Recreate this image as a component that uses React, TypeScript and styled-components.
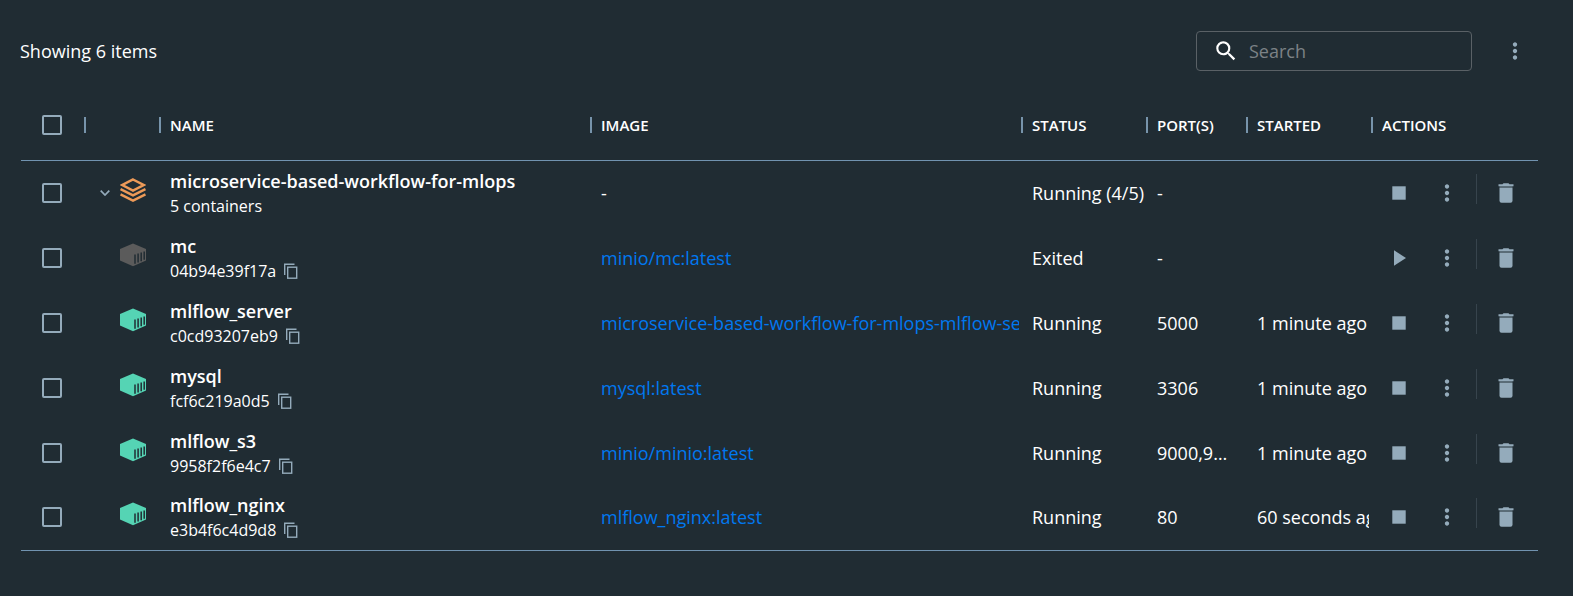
import React from "react";
import styled, { createGlobalStyle } from "styled-components";
import { MdMoreVert, MdSearch } from "react-icons/md";

const GlobalStyle = createGlobalStyle`
  * { box-sizing: border-box; }
  body {
    margin: 0;
    background: #202c33;
    color: #ffffff;
    font-family: "Open Sans", sans-serif;
    font-size: 18px;
    line-height: 24px;
  }
`;

const Page = styled.main`
  padding: 31px 35px 40px 20px;
`;

const Toolbar = styled.header`
  display: flex;
  align-items: center;
  height: 40px;
`;

const Count = styled.p`
  margin: 0 auto 0 0;
`;

const SearchBox = styled.label`
  display: flex;
  align-items: center;
  gap: 10px;
  width: 276px;
  height: 40px;
  padding: 0 16px;
  border: 1px solid #5a6166;
  border-radius: 4px;
`;

const SearchInput = styled.input`
  flex: 1;
  min-width: 0;
  padding: 0;
  border: 0;
  outline: 0;
  background: none;
  color: inherit;
  font: inherit;
  &::placeholder {
    color: #7c8286;
    opacity: 1;
  }
`;

const IconButton = styled.button`
  display: flex;
  align-items: center;
  justify-content: center;
  width: 30px;
  height: 30px;
  padding: 0;
  border: 0;
  background: none;
  color: #94abbb;
  cursor: pointer;
`;

const MenuSlot = styled.div`
  margin: 0 8px 0 28px;
`;

const TableFrame = styled.section`
  margin: 19px 0 0 1px;
`;

const Table = styled.table`
  width: 100%;
  table-layout: fixed;
  border-collapse: separate;
  border-spacing: 0;
`;

const Col = styled.col<{ $width?: number }>`
  width: ${(p) => (p.$width ? `${p.$width}px` : "auto")};
`;

const Th = styled.th<{ $check?: boolean }>`
  position: relative;
  height: 71px;
  padding: 0 4px 0 ${(p) => (p.$check ? 21 : 9)}px;
  border-bottom: 1px solid #7193b0;
  text-align: left;
  font-size: 15px;
  font-weight: 600;
  line-height: 20px;
  text-transform: uppercase;
  &:not(:last-child)::after {
    content: "";
    position: absolute;
    right: 0;
    top: 27px;
    width: 2px;
    height: 16px;
    background: #7794ab;
  }
`;

const Row = styled.tr`
  &:last-child > td {
    border-bottom: 1px solid #7193b0;
  }
`;

const Td = styled.td<{ $check?: boolean }>`
  height: 65px;
  padding: 0 4px 2px ${(p) => (p.$check ? 21 : 9)}px;
  white-space: nowrap;
`;

const Clip = styled.div`
  overflow: hidden;
`;

const Checkbox = styled.input`
  display: block;
  appearance: none;
  width: 20px;
  height: 20px;
  margin: 0;
  border: 2px solid #94abbb;
  border-radius: 2px;
  &:checked {
    background: #94abbb;
  }
`;

const KindCell = styled.div`
  display: flex;
  align-items: center;
  justify-content: flex-end;
  gap: 10px;
  padding-right: 11px;
`;

const Chevron = styled(IconButton)`
  width: 10px;
  height: 20px;
`;

const KindIcon = styled.svg`
  width: 26px;
  height: 30px;
  padding-bottom: 6px;
`;

const Name = styled.div`
  font-weight: 600;
  line-height: 26px;
`;

const Detail = styled.div`
  display: flex;
  align-items: center;
  gap: 7px;
  font-size: 16px;
  line-height: 24px;
`;

const CopyButton = styled(IconButton)`
  width: 16px;
  height: 16px;
`;

const ImageLink = styled.a`
  color: #0078f0;
  text-decoration: none;
`;

const Ports = styled.div`
  width: 76px;
  overflow: hidden;
  text-overflow: ellipsis;
`;

const Actions = styled.div`
  display: flex;
  align-items: center;
  height: 38px;
  padding-left: 2px;
`;

const MoreButton = styled(IconButton)`
  margin-left: 18px;
`;

const Divider = styled.span`
  align-self: flex-start;
  width: 1px;
  height: 30px;
  margin: 0 14px;
  background: #37444d;
`;

const StackIcon = () => (
  <KindIcon viewBox="0 0 26 24" fill="none" stroke="#ed9a58" strokeWidth="2.5" aria-hidden="true">
    <path d="M13 1.5 23.6 7 13 12.5 2.4 7Z" />
    <path d="M0.5 11.2 13 17.4 25.5 11.2" />
    <path d="M0.5 16.4 13 22.6 25.5 16.4" />
  </KindIcon>
);

const ContainerIcon = ({ color }: { color: string }) => (
  <KindIcon viewBox="0 0 26 24" aria-hidden="true">
    <path d="M13 0.6 26 6V17.6L13 23.2 0 17.6V6Z" fill={color} />
    <path d="M15 11.4v9.4M18.1 10.4v9.2M21.2 9.4v8.8M24.2 8.6v8.2" stroke="#202c33" strokeWidth="1.5" />
  </KindIcon>
);

const CopyIcon = () => (
  <svg width="16" height="16" viewBox="0 0 16 16" fill="none" stroke="currentColor" strokeWidth="1.4">
    <rect x="4.7" y="4.2" width="9" height="11" />
    <path d="M1.7 12V1.2H11.5" />
  </svg>
);

const StopIcon = () => (
  <svg width="14" height="14" viewBox="0 0 14 14">
    <rect x="0.3" y="0.3" width="13.4" height="13.4" fill="currentColor" />
  </svg>
);

const PlayIcon = () => (
  <svg width="14" height="16" viewBox="0 0 14 16">
    <path d="M2 0.3 14 8 2 15.7Z" fill="currentColor" />
  </svg>
);

const TrashIcon = () => (
  <svg width="16" height="20" viewBox="0 0 16 20" fill="currentColor">
    <path d="M0.5 1.2H4.5L5.5 0.2H10.5L11.5 1.2H15.5V3.3H0.5Z" />
    <path d="M1.5 3.3H14.5V5H1.5Z" opacity="0.5" />
    <path d="M1.5 5H14.5V17.8A2 2 0 0 1 12.5 19.8H3.5A2 2 0 0 1 1.5 17.8Z" />
  </svg>
);

type Container = {
  name: string;
  id: string;
  image: string;
  status: string;
  ports: string;
  started: string;
};

const containers: Container[] = [
  { name: "mc", id: "04b94e39f17a", image: "minio/mc:latest", status: "Exited", ports: "-", started: "" },
  { name: "mlflow_server", id: "c0cd93207eb9", image: "microservice-based-workflow-for-mlops-mlflow-server:latest", status: "Running", ports: "5000", started: "1 minute ago" },
  { name: "mysql", id: "fcf6c219a0d5", image: "mysql:latest", status: "Running", ports: "3306", started: "1 minute ago" },
  { name: "mlflow_s3", id: "9958f2f6e4c7", image: "minio/minio:latest", status: "Running", ports: "9000,9001", started: "1 minute ago" },
  { name: "mlflow_nginx", id: "e3b4f6c4d9d8", image: "mlflow_nginx:latest", status: "Running", ports: "80", started: "60 seconds ago" },
];

const RowActions = ({ name, running }: { name: string; running: boolean }) => (
  <Actions>
    <IconButton aria-label={`${running ? "Stop" : "Start"} ${name}`}>
      {running ? <StopIcon /> : <PlayIcon />}
    </IconButton>
    <MoreButton aria-label={`More actions for ${name}`}>
      <MdMoreVert size={26} />
    </MoreButton>
    <Divider />
    <IconButton aria-label={`Delete ${name}`}>
      <TrashIcon />
    </IconButton>
  </Actions>
);

export default function App() {
  return (
    <Page>
      <GlobalStyle />
      <Toolbar>
        <Count>Showing 6 items</Count>
        <SearchBox>
          <MdSearch size={26} />
          <SearchInput type="text" placeholder="Search" aria-label="Search" />
        </SearchBox>
        <MenuSlot>
          <IconButton aria-label="Table options">
            <MdMoreVert size={26} />
          </IconButton>
        </MenuSlot>
      </Toolbar>
      <TableFrame>
        <Table>
          <colgroup>
            <Col $width={65} />
            <Col $width={75} />
            <Col />
            <Col />
            <Col $width={125} />
            <Col $width={100} />
            <Col $width={125} />
            <Col $width={165} />
          </colgroup>
          <thead>
            <tr>
              <Th $check>
                <Checkbox type="checkbox" aria-label="Select all" />
              </Th>
              <Th aria-label="Kind" />
              <Th>Name</Th>
              <Th>Image</Th>
              <Th>Status</Th>
              <Th>Port(s)</Th>
              <Th>Started</Th>
              <Th>Actions</Th>
            </tr>
          </thead>
          <tbody>
            <Row>
              <Td $check>
                <Checkbox type="checkbox" aria-label="Select microservice-based-workflow-for-mlops" />
              </Td>
              <Td>
                <KindCell>
                  <Chevron aria-label="Collapse group">
                    <svg width="10" height="6" viewBox="0 0 10 6" fill="none" stroke="currentColor" strokeWidth="1.7">
                      <path d="M0.7 0.7 5 5 9.3 0.7" />
                    </svg>
                  </Chevron>
                  <StackIcon />
                </KindCell>
              </Td>
              <Td>
                <Name>microservice-based-workflow-for-mlops</Name>
                <Detail>5 containers</Detail>
              </Td>
              <Td>-</Td>
              <Td>Running (4/5)</Td>
              <Td>-</Td>
              <Td />
              <Td>
                <RowActions name="microservice-based-workflow-for-mlops" running />
              </Td>
            </Row>
            {containers.map((c) => {
              const running = c.status === "Running";
              return (
                <Row key={c.id}>
                  <Td $check>
                    <Checkbox type="checkbox" aria-label={`Select ${c.name}`} />
                  </Td>
                  <Td>
                    <KindCell>
                      <ContainerIcon color={running ? "#55d4b4" : "#5b5b5b"} />
                    </KindCell>
                  </Td>
                  <Td>
                    <Name>{c.name}</Name>
                    <Detail>
                      {c.id}
                      <CopyButton aria-label={`Copy ID of ${c.name}`}>
                        <CopyIcon />
                      </CopyButton>
                    </Detail>
                  </Td>
                  <Td>
                    <Clip>
                      <ImageLink href="#">{c.image}</ImageLink>
                    </Clip>
                  </Td>
                  <Td>{c.status}</Td>
                  <Td>
                    <Ports>{c.ports}</Ports>
                  </Td>
                  <Td>
                    <Clip>{c.started}</Clip>
                  </Td>
                  <Td>
                    <RowActions name={c.name} running={running} />
                  </Td>
                </Row>
              );
            })}
          </tbody>
        </Table>
      </TableFrame>
    </Page>
  );
}
